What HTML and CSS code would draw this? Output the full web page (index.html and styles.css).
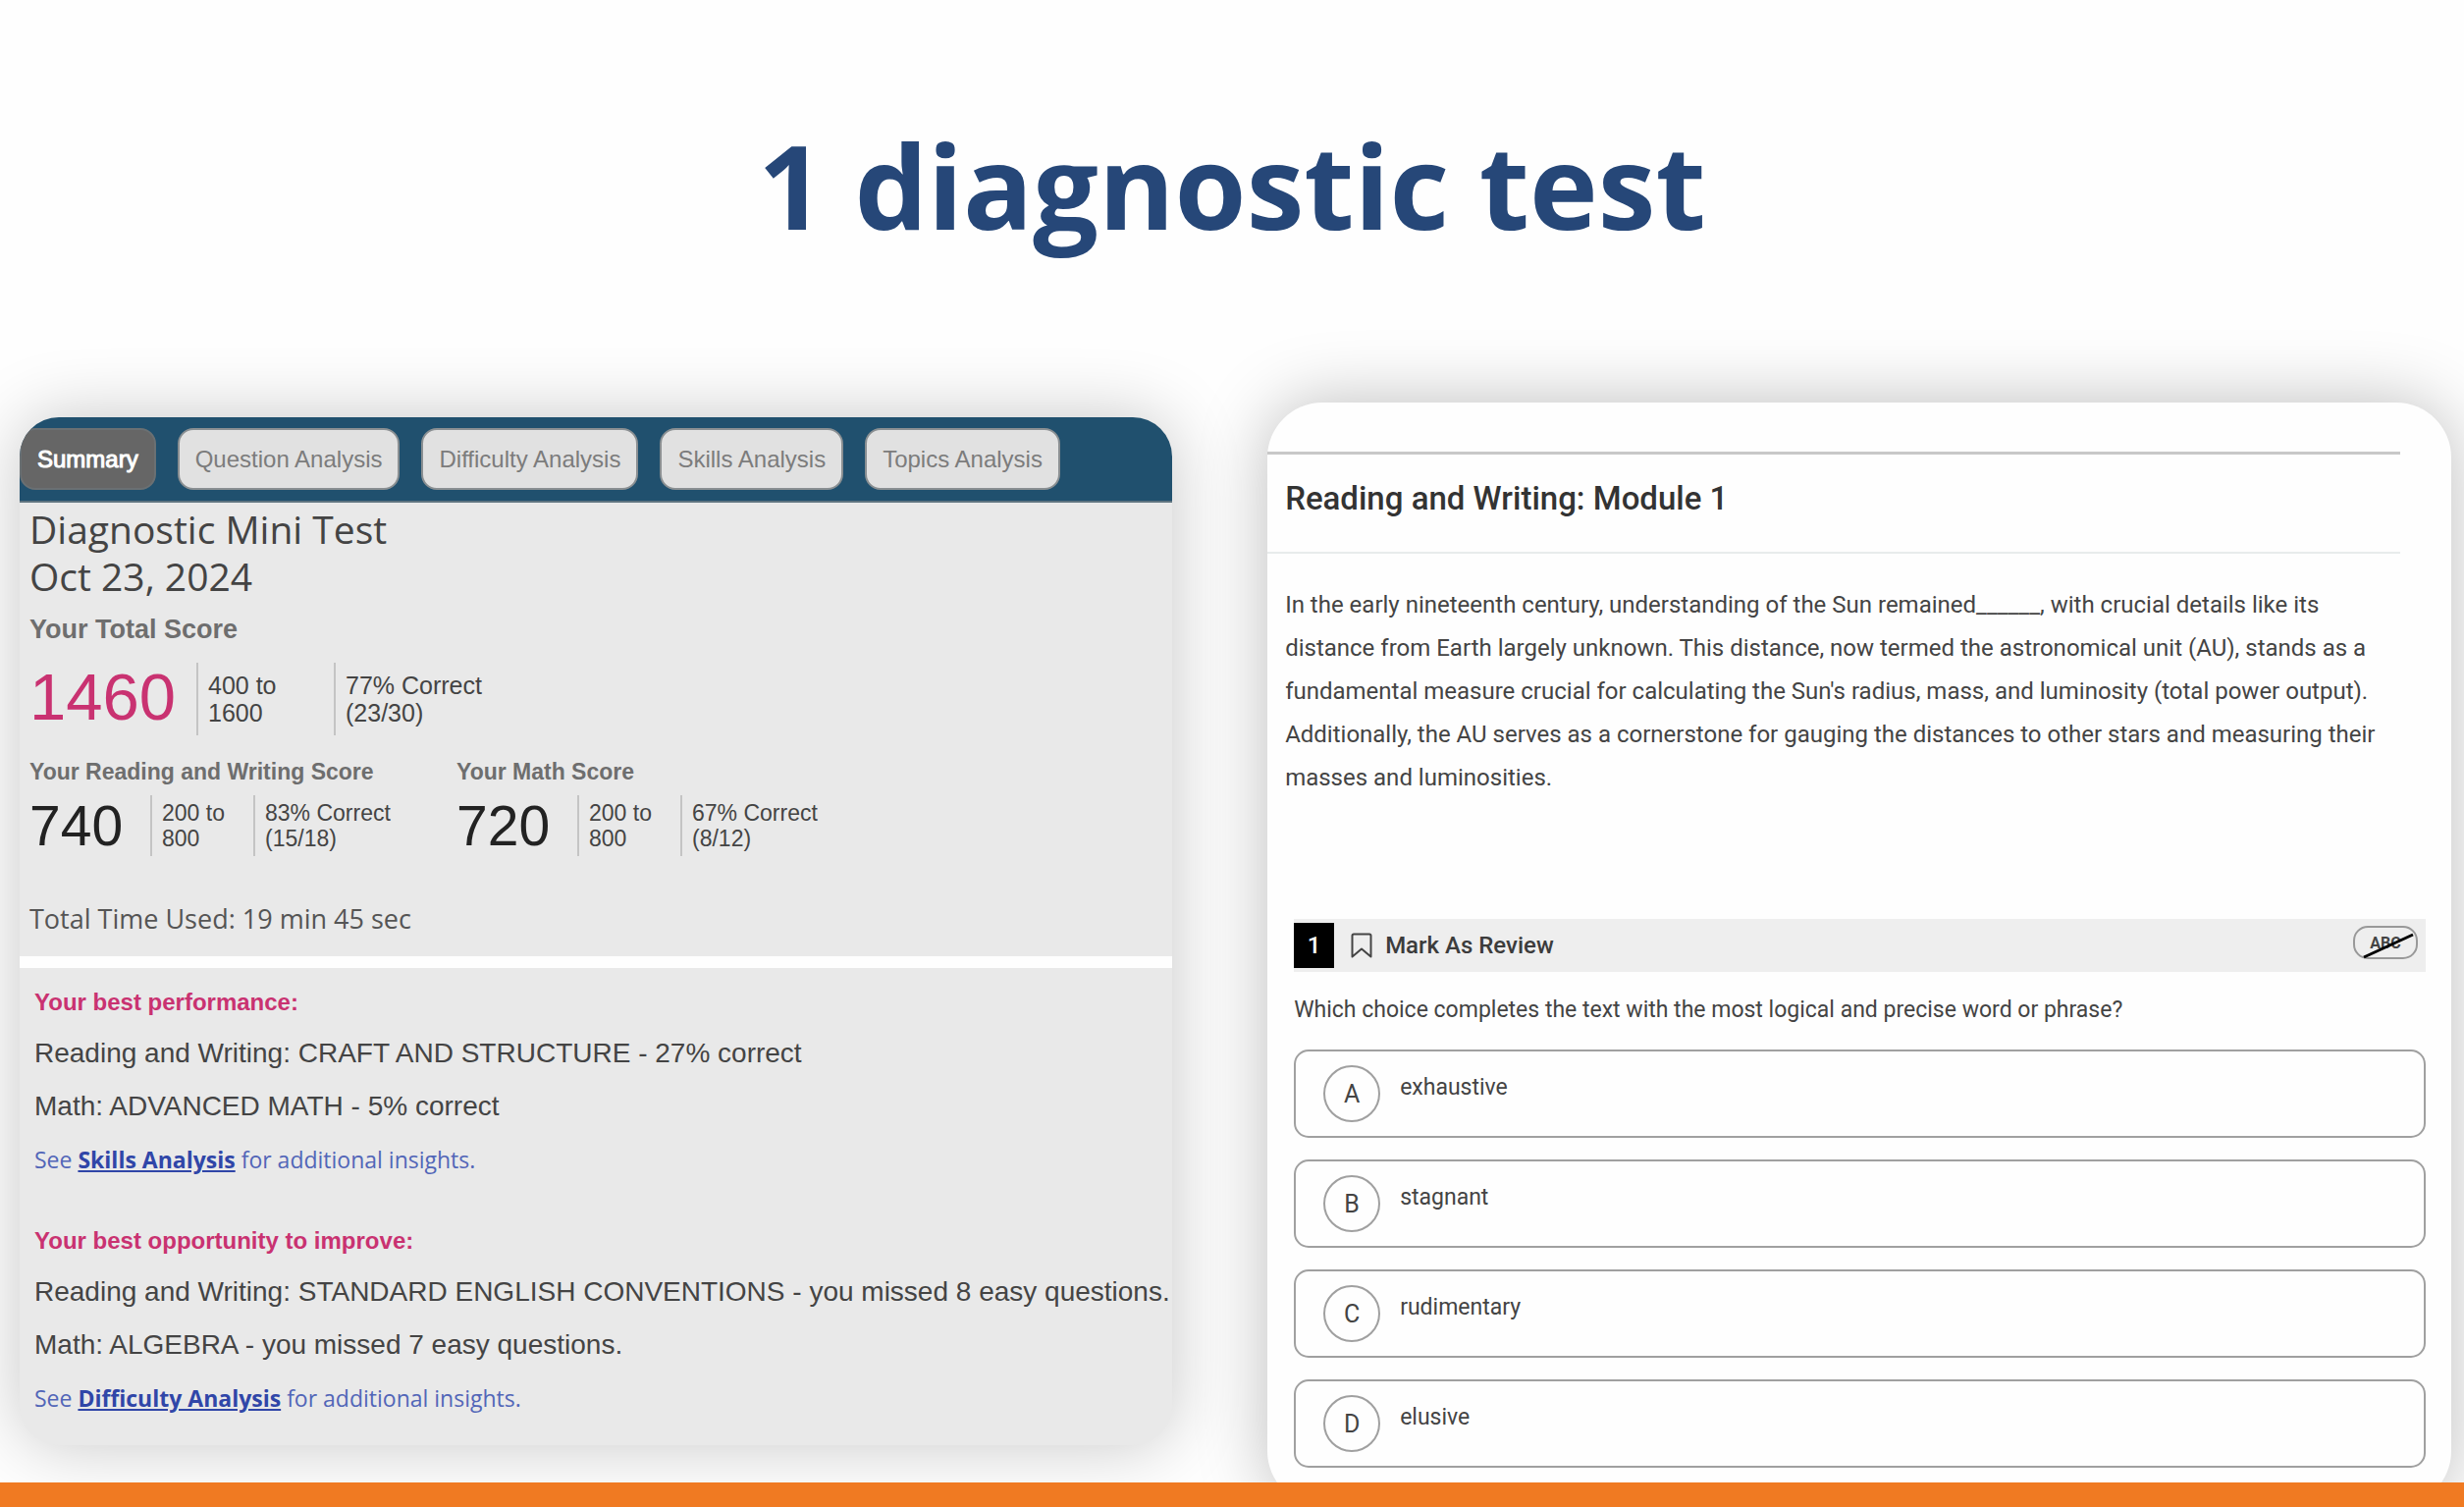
FILE: index.html
```html
<!DOCTYPE html>
<html lang="en">

<head>
    <meta charset="UTF-8">
    <meta name="viewport" content="width=device-width, initial-scale=1.0">
    <title>1 diagnostic test</title>
    <link rel="stylesheet" href="styles.css">
</head>

<body>
    <header class="title">
        <h1>1 diagnostic test</h1>
    </header>

    <main class="panels">
        <section class="report">
            <nav class="tabs">
                <button class="tab active">Summary</button>
                <button class="tab">Question Analysis</button>
                <button class="tab">Difficulty Analysis</button>
                <button class="tab">Skills Analysis</button>
                <button class="tab">Topics Analysis</button>
            </nav>

            <div class="summary">
                <h2>Diagnostic Mini Test<br>Oct 23, 2024</h2>

                <div class="score total">
                    <h3>Your Total Score</h3>
                    <div class="score-row">
                        <div class="number">1460</div>
                        <div class="range">400 to<br>1600</div>
                        <div class="correct">77% Correct<br>(23/30)</div>
                    </div>
                </div>

                <div class="sections">
                    <div class="score">
                        <h3>Your Reading and Writing Score</h3>
                        <div class="score-row">
                            <div class="number">740</div>
                            <div class="range">200 to<br>800</div>
                            <div class="correct">83% Correct<br>(15/18)</div>
                        </div>
                    </div>
                    <div class="score">
                        <h3>Your Math Score</h3>
                        <div class="score-row">
                            <div class="number">720</div>
                            <div class="range">200 to<br>800</div>
                            <div class="correct">67% Correct<br>(8/12)</div>
                        </div>
                    </div>
                </div>

                <p class="time">Total Time Used: 19 min 45 sec</p>
            </div>

            <div class="insights">
                <div class="insight">
                    <h3>Your best performance:</h3>
                    <p>Reading and Writing: CRAFT AND STRUCTURE - 27% correct</p>
                    <p>Math: ADVANCED MATH - 5% correct</p>
                    <p class="see">See <a href="#">Skills Analysis</a> for additional insights.</p>
                </div>
                <div class="insight">
                    <h3>Your best opportunity to improve:</h3>
                    <p>Reading and Writing: STANDARD ENGLISH CONVENTIONS - you missed 8 easy questions.</p>
                    <p>Math: ALGEBRA - you missed 7 easy questions.</p>
                    <p class="see">See <a href="#">Difficulty Analysis</a> for additional insights.</p>
                </div>
            </div>
        </section>

        <section class="test">
            <h2>Reading and Writing: Module 1</h2>

            <p class="passage">In the early nineteenth century, understanding of the Sun remained______, with crucial details like its distance from Earth largely unknown. This distance, now termed the astronomical unit (AU), stands as a fundamental measure crucial for calculating the Sun's radius, mass, and luminosity (total power output). Additionally, the AU serves as a cornerstone for gauging the distances to other stars and measuring their masses and luminosities.</p>

            <div class="question">
                <div class="question-bar">
                    <span class="question-number">1</span>
                    <button class="review">
                        <svg width="22" height="26" viewBox="0 0 22 26" fill="none" stroke="#444" stroke-width="2" stroke-linejoin="round">
                            <path d="M1.5 3Q1.5 1.5 3 1.5H19Q20.500 1.500 20.500 3V24.500L11 16.500L1.500 24.500Z" />
                        </svg>
                        Mark As Review
                    </button>
                    <button class="eliminate">
                        ABC
                        <svg width="66" height="34" viewBox="0 0 66 34">
                            <path d="M11 32L61 9" stroke="#000" stroke-width="3" />
                        </svg>
                    </button>
                </div>

                <p class="prompt">Which choice completes the text with the most logical and precise word or phrase?</p>

                <div class="choices">
                    <label class="choice">
                        <input type="radio" name="answer" value="A">
                        <span class="letter">A</span>
                        <span class="word">exhaustive</span>
                    </label>
                    <label class="choice">
                        <input type="radio" name="answer" value="B">
                        <span class="letter">B</span>
                        <span class="word">stagnant</span>
                    </label>
                    <label class="choice">
                        <input type="radio" name="answer" value="C">
                        <span class="letter">C</span>
                        <span class="word">rudimentary</span>
                    </label>
                    <label class="choice">
                        <input type="radio" name="answer" value="D">
                        <span class="letter">D</span>
                        <span class="word">elusive</span>
                    </label>
                </div>
            </div>
        </section>
    </main>

    <footer class="strip"></footer>
</body>

</html>
```
FILE: styles.css
```css
* {
    box-sizing: border-box;
    margin: 0;
    padding: 0;
}

body {
    display: flex;
    flex-direction: column;
    min-height: 100vh;
    background: #fefefe;
    color: #444;
    font-family: "Liberation Sans", Arial, sans-serif;
    overflow-x: hidden;
}

button {
    border: none;
    background: none;
    color: inherit;
    font: inherit;
    cursor: pointer;
}

.title {
    height: 410px;
    padding-top: 99px;
    text-align: center;
}

.title h1 {
    color: #264778;
    font: bold 118px/180px "Open Sans", sans-serif;
}

.panels {
    display: grid;
    grid-template-columns: 37fr 38fr;
    gap: 97px;
    align-items: start;
    flex: 1;
    padding: 0 13px 0 20px;
}

/* score report */
.report {
    margin-top: 15px;
    border-radius: 40px;
    background: #e9e9e9;
    box-shadow: 0 0 70px rgba(0, 0, 0, 0.22);
    overflow: hidden;
}

.tabs {
    display: flex;
    gap: 22px;
    height: 87px;
    padding-top: 11px;
    border-bottom: 2px solid #5f7480;
    background: #20506e;
}

.tab {
    height: 63px;
    padding: 0 16px;
    border: 2px solid #8a8f92;
    border-radius: 16px;
    background: #e1e1e1;
    color: #7c7c7c;
    font-size: 24px;
}

.tab.active {
    border-color: #6a7073;
    background: #666;
    color: #fff;
    -webkit-text-stroke: 1px #fff;
}

.summary {
    height: 462px;
    padding: 3px 10px 0;
}

.summary h2 {
    font: 39px/48px "Open Sans", sans-serif;
}

.score h3 {
    color: #6e6e6e;
    font-size: 23px;
    line-height: 28px;
}

.score-row {
    display: flex;
    gap: 11px;
    font-size: 23px;
    line-height: 26px;
}

.number {
    width: 112px;
    color: #222;
    font-size: 57px;
    line-height: 62px;
}

.range,
.correct {
    height: 62px;
    padding: 5px 0 0 10px;
    border-left: 2px solid #c4c4c4;
}

.range {
    width: 94px;
}

.total {
    padding-top: 16px;
}

.total h3 {
    font-size: 27px;
}

.total .score-row {
    margin-top: 20px;
    font-size: 25px;
    line-height: 28px;
}

.total .number {
    width: 159px;
    color: #c93271;
    font-size: 67px;
    line-height: 70px;
}

.total .range,
.total .correct {
    height: 74px;
    padding-top: 9px;
}

.total .range {
    width: 129px;
}

.sections {
    display: grid;
    grid-template-columns: 435px 1fr;
    padding-top: 23px;
}

.sections .score-row {
    margin-top: 10px;
}

.time {
    padding-top: 45px;
    color: #555;
    font: 27px/38px "Open Sans", sans-serif;
}

.insights {
    padding: 16px 0 21px 15px;
    border-top: 12px solid #fefefe;
    white-space: nowrap;
}

.insight h3 {
    margin-bottom: 6px;
    color: #c93271;
    font-size: 24px;
    line-height: 38px;
}

.insight p {
    font-size: 28px;
    line-height: 54px;
}

.insight .see {
    color: #5266b8;
    font: 23px/54px "Open Sans", sans-serif;
}

.see a {
    color: #3046a8;
    font-weight: bold;
}

.insight + .insight {
    margin-top: 37px;
}

/* test page */
.test {
    min-width: 0;
    margin-bottom: -24px;
    padding: 50px 26px 39px 0;
    border-radius: 56px;
    background: #fefefe;
    box-shadow: 0 0 70px rgba(0, 0, 0, 0.26);
    font-family: Roboto, sans-serif;
}

.test h2 {
    height: 104px;
    margin-right: 26px;
    padding: 0 18px;
    border-top: 3px solid #c8c8c8;
    border-bottom: 2px solid #e8ecec;
    color: #333;
    font-size: 33px;
    font-weight: 500;
    line-height: 90px;
}

.passage {
    margin-right: 26px;
    padding: 30px 10px 0 18px;
    font-size: 24px;
    line-height: 44px;
}

.question {
    padding: 122px 0 0 27px;
}

.question-bar {
    display: flex;
    align-items: center;
    height: 54px;
    padding-right: 8px;
    background: #eee;
}

.question-number {
    width: 41px;
    background: #000;
    color: #fff;
    font-size: 24px;
    font-weight: 500;
    line-height: 46px;
    text-align: center;
}

.review {
    display: flex;
    align-items: center;
    gap: 13px;
    margin-left: 17px;
    color: #3c3c3c;
    font-size: 24px;
    font-weight: 500;
}

.eliminate {
    position: relative;
    width: 66px;
    height: 34px;
    margin: 0 0 6px auto;
    border: 2px solid #999;
    border-radius: 15px;
    font-size: 16px;
    font-weight: bold;
}

.eliminate svg {
    position: absolute;
    top: -2px;
    left: -2px;
}

.prompt {
    padding-top: 20px;
    font-size: 23px;
    line-height: 38px;
}

.choices {
    display: grid;
    gap: 22px;
    padding-top: 21px;
}

.choice {
    display: grid;
    grid-template-columns: 58px 1fr;
    column-gap: 20px;
    height: 90px;
    padding: 14px 28px;
    border: 2px solid #a0a0a0;
    border-radius: 15px;
    cursor: pointer;
}

.choice input {
    grid-area: 1 / 1;
    appearance: none;
    width: 58px;
    height: 58px;
    border: 2px solid #a0a0a0;
    border-radius: 50%;
}

.choice input:checked {
    border-color: #20506e;
}

.letter {
    grid-area: 1 / 1;
    font-size: 25px;
    line-height: 60px;
    text-align: center;
}

.word {
    grid-area: 1 / 2;
    font-size: 23px;
    line-height: 46px;
}

.strip {
    position: relative;
    height: 27px;
    background: #f07a22;
}
```
